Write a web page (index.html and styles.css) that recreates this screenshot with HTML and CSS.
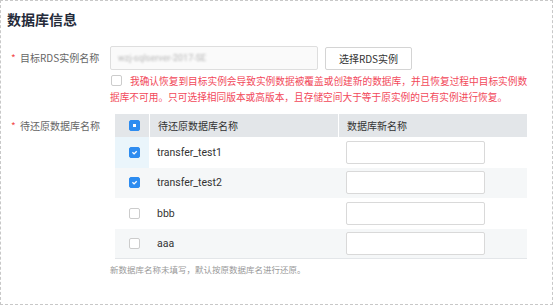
FILE: index.html
```html
<!DOCTYPE html>
<html lang="zh-CN">
<head>
    <meta charset="UTF-8">
    <title>数据库信息</title>
    <link rel="stylesheet" href="styles.css">
</head>
<body>
    <div class="panel">
        <!--1. 제목-->
        <h2 class="title">数据库信息</h2>

        <!--2. 目标实例-->
        <div class="field field-inst">
            <label class="field-label"><i class="req">*</i>目标RDS实例名称</label>
            <div class="field-body">
                <div class="inst-row">
                    <div class="inst-input"><span class="blur">wzj-sqlserver-2017-SE</span></div>
                    <button class="btn" type="button">选择RDS实例</button>
                </div>
                <p class="confirm"><span class="cb"></span>我确认恢复到目标实例会导致实例数据被覆盖或创建新的数据库，并且恢复过程中目标实例数据库不可用。只可选择相同版本或高版本，且存储空间大于等于原实例的已有实例进行恢复。</p>
            </div>
        </div>

        <!--3. 待还原数据库-->
        <div class="field field-db">
            <label class="field-label"><i class="req">*</i>待还原数据库名称</label>
            <div class="field-body">
                <div class="db-table">
                    <div class="th th-cb"><span class="cb cb-part"></span></div>
                    <div class="th">待还原数据库名称</div>
                    <div class="th">数据库新名称</div>

                    <div class="td td-cb hl"><span class="cb cb-on"><svg viewBox="0 0 11 11"><path d="M3 5.2 L5 7.2 L8.2 3.9"/></svg></span></div>
                    <div class="td name">transfer_test1</div>
                    <div class="td"><input class="new-name" type="text"></div>

                    <div class="td td-cb odd"><span class="cb cb-on"><svg viewBox="0 0 11 11"><path d="M3 5.2 L5 7.2 L8.2 3.9"/></svg></span></div>
                    <div class="td name odd">transfer_test2</div>
                    <div class="td odd"><input class="new-name" type="text"></div>

                    <div class="td td-cb"><span class="cb"></span></div>
                    <div class="td name">bbb</div>
                    <div class="td"><input class="new-name" type="text"></div>

                    <div class="td td-cb odd last"><span class="cb"></span></div>
                    <div class="td name odd last">aaa</div>
                    <div class="td odd last"><input class="new-name" type="text"></div>
                </div>
                <p class="hint">新数据库名称未填写，默认按原数据库名进行还原。</p>
            </div>
        </div>
    </div>
</body>
</html>
```

FILE: styles.css
```css
html,
body,
h2,
p {
    margin: 0;
    padding: 0;
}

body {
    background: #fff;
    font-family: "Noto Sans CJK SC", sans-serif;
    color: #333;
}

/*바깥 점선박스*/
.panel {
    box-sizing: border-box;
    width: 553px;
    height: 305px;
    border: 1px dashed #c8c8c8;
}

/*1.타이틀*/
.title {
    margin: 8px 0 0 6px;
    font-size: 14px;
    line-height: 20px;
    font-weight: bold;
    color: #252b3a;
}

/*공통 행*/
.field {
    display: flex;
    align-items: flex-start;
}

.field-label {
    box-sizing: border-box;
    width: 109px;
    padding-left: 10px;
    font-size: 10px;
    color: #666;
    white-space: nowrap;
}

.req {
    display: inline-block;
    width: 9px;
    font-style: normal;
    color: #f24b4b;
}

/*2.目标实例*/
.field-inst {
    margin-top: 17px;
}

.field-inst .field-label {
    line-height: 24px;
}

.inst-row {
    display: flex;
    align-items: center;
    gap: 7px;
}

.inst-input {
    box-sizing: border-box;
    width: 208px;
    height: 24px;
    padding-left: 7px;
    border: 1px solid #dedede;
    border-radius: 2px;
    background: #fafafa;
    font: 9px/22px Roboto, sans-serif;
    color: #b5b5b5;
}

.blur {
    display: inline-block;
    filter: blur(1px);
}

.btn {
    box-sizing: border-box;
    width: 87px;
    height: 23px;
    padding: 0;
    border: 1px solid #d4d4d4;
    border-radius: 2px;
    background: #fff;
    font: 10px "Noto Sans CJK SC", sans-serif;
    color: #333;
}

.confirm {
    width: 422px;
    margin-top: 3px;
    font-size: 9.7px;
    line-height: 16px;
    color: #f2485a;
}

.confirm .cb {
    margin: 0 8px 0 1px;
    vertical-align: -1px;
}

/*체크박스*/
.cb {
    box-sizing: border-box;
    display: inline-block;
    width: 11px;
    height: 11px;
    border: 1px solid #ccc;
    border-radius: 2px;
    background: #fff;
}

.cb-on,
.cb-part {
    position: relative;
    border-color: #2d8cf0;
    background: #2d8cf0;
}

.cb-on svg {
    display: block;
    width: 9px;
    height: 9px;
}

.cb-on path {
    fill: none;
    stroke: #fff;
    stroke-width: 1.6;
}

/*반선택 표시*/
.cb-part::after {
    content: "";
    position: absolute;
    top: 3px;
    left: 3px;
    width: 3px;
    height: 3px;
    background: #fff;
}

/*3.数据库 테이블*/
.field-db {
    margin-top: 9px;
}

.field-db .field-label {
    line-height: 23px;
}

.db-table {
    display: grid;
    grid-template-columns: 34px 189px 189px;
    grid-template-rows: 23px repeat(4, 30.5px);
    width: 412px;
    margin-left: 5px;
}

.th {
    display: flex;
    align-items: center;
    padding-left: 8px;
    background: #e3e6e9;
    border-left: 1px solid #fff;
    font-size: 10px;
    color: #333;
}

.th-cb {
    border-left: 0;
    padding-left: 14px;
}

.td {
    display: flex;
    align-items: center;
    padding-left: 8px;
    background: #fff;
}

.td-cb {
    padding-left: 14px;
}

.name {
    font: 10.5px Roboto, sans-serif;
    color: #333;
}

.hl {
    background: #eaf5fb;
}

.odd {
    background: #f5f7f8;
}

.last {
    border-bottom: 1px solid #e3e6e9;
}

.new-name {
    box-sizing: border-box;
    width: 139px;
    height: 23px;
    margin: 0;
    border: 1px solid #d9d9d9;
    border-radius: 2px;
    background: #fff;
}

.hint {
    margin-top: 4px;
    font-size: 8.5px;
    line-height: 12px;
    color: #999;
}
```
